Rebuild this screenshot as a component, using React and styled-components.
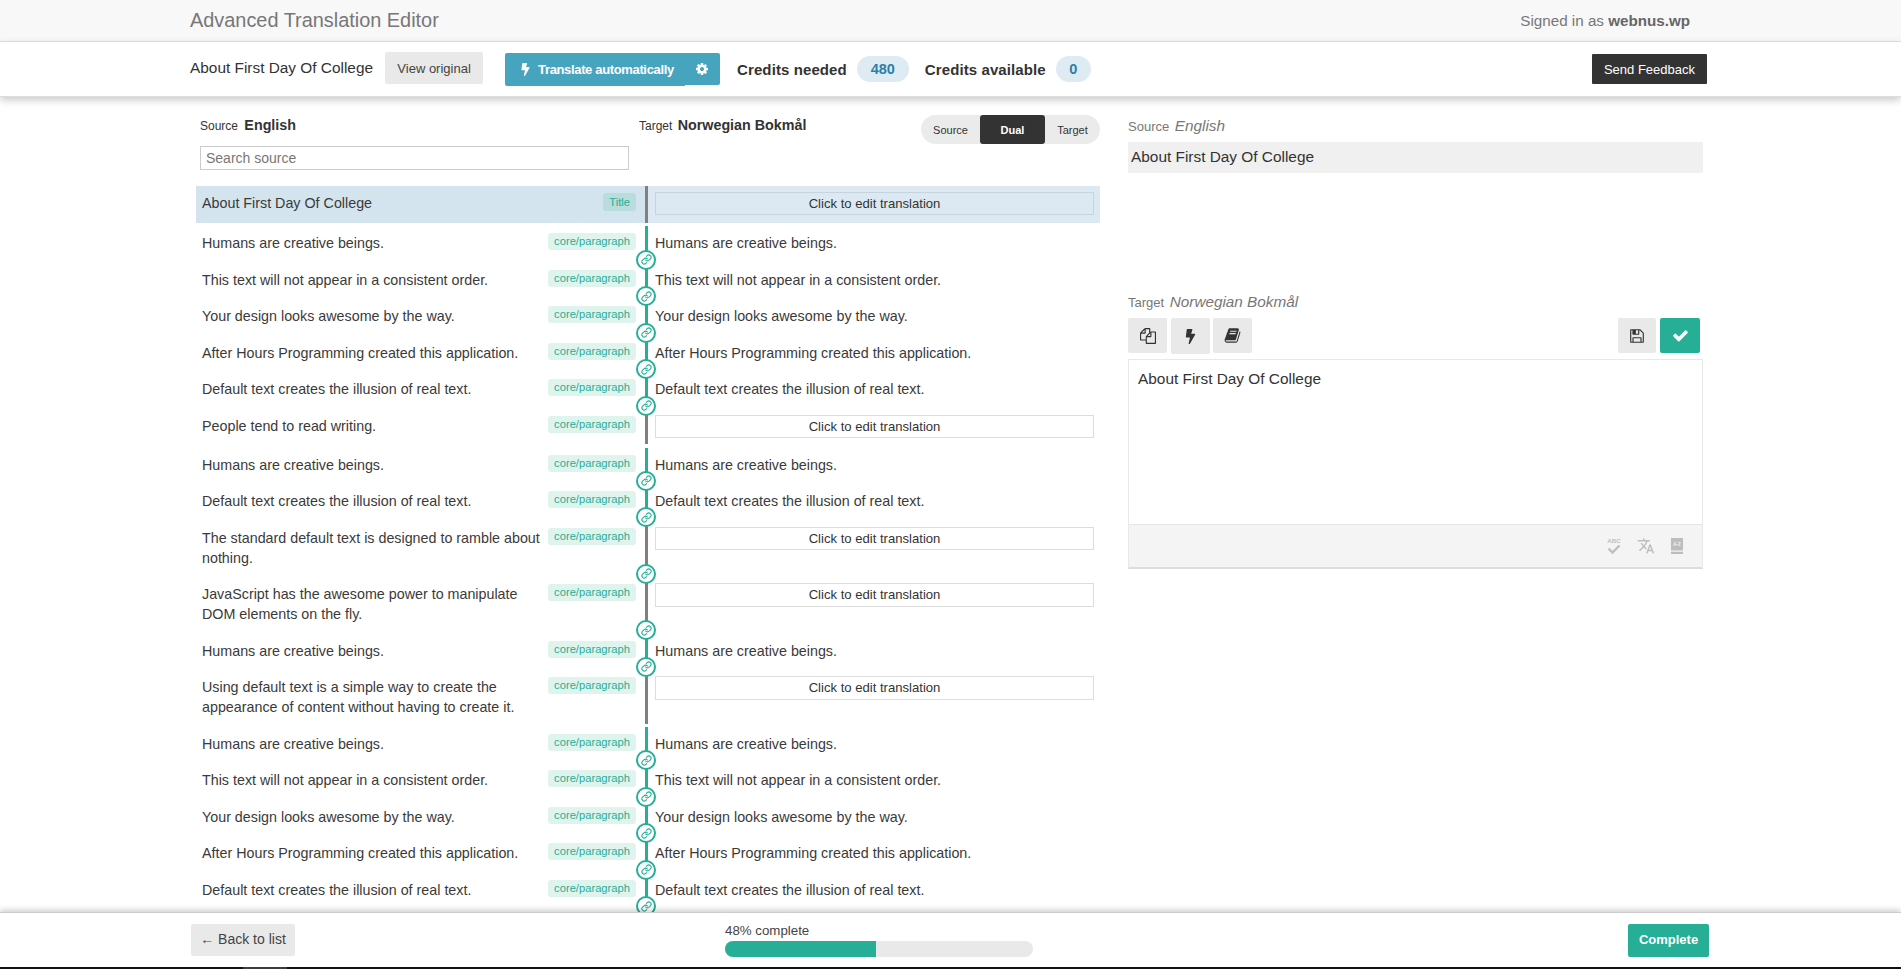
import React from "react";
import styled, { createGlobalStyle } from "styled-components";
import { FaBolt } from "react-icons/fa";
import { Link as LinkIcon } from "lucide-react";

const TEAL = "#27ae96";
const Global = createGlobalStyle`
  html, body { margin: 0; padding: 0; height: 100%; overflow: hidden; background: #fff; }
  body { font-family: "Liberation Sans", Arial, sans-serif; color: #333; font-size: 14px; }
  * { box-sizing: border-box; }
`;
const Page = styled.div`position: relative; height: 969px; overflow: hidden;`;
const TopBar = styled.header`
  height: 42px; background: #f8f8f8; border-bottom: 1px solid #e4e4e4;
  display: flex; align-items: center; justify-content: space-between; padding: 0 211px 1px 190px;
`;
const AppTitle = styled.div`font-size: 19.9px; color: #777;`;
const Signed = styled.div`font-size: 15.2px; color: #777; b { color: #666; }`;
const ActionBar = styled.div`
  position: relative; z-index: 2; height: 55px; background: #fff; border-bottom: 1px solid #ddd;
  box-shadow: 0 3px 8px rgba(0,0,0,.22);
  display: flex; align-items: center; padding: 0 194px 0 190px;
`;
const DocTitle = styled.div`font-size: 15.4px; margin-right: 12px; margin-top: -3px;`;
const GreyBtn = styled.button`
  border: 0; border-radius: 2px; background: #e9e9e9; color: #444; font: 13px "Liberation Sans", Arial, sans-serif;
  height: 32px; width: 98px; margin-top: -2px; padding: 0;
`;
const AutoGroup = styled.div`display: flex; align-items: flex-start; margin-left: 22px; height: 33px; margin-right: 17px;`;
const AutoBtn = styled.div`
  width: 180px; height: 33px; background: #47a4bf; color: #fff; font-size: 13px; font-weight: 700;
  display: flex; align-items: center; gap: 6px; padding-left: 14px; border-radius: 2px 0 0 2px; letter-spacing: -.35px;
`;
const AutoCog = styled.div`
  width: 35px; height: 32px; background: #47a4bf; color: #fff; padding-right: 2px;
  display: flex; align-items: center; justify-content: center; border-radius: 0 2px 2px 0;
`;
const CreditLabel = styled.div`font-size: 15px; font-weight: 700; letter-spacing: .1px; margin-right: 10px;`;
const CreditBadge = styled.div`
  height: 26px; min-width: ${p => p.$w}px; border-radius: 13px; background: #deebf3; color: #2b7fa8;
  font-size: 14.5px; font-weight: 700; display: flex; align-items: center; justify-content: center; margin-right: 16px;
`;
const Feedback = styled.button`
  margin-left: auto; width: 115px; height: 30px; border: 0; background: #333; color: #fff; border-radius: 1px;
  font: 13px "Liberation Sans", Arial, sans-serif; padding: 0;
`;
const Main = styled.main`display: flex; gap: 28px; padding-left: 196px;`;
const LeftCol = styled.section`width: 904px; flex: none;`;
const ListHead = styled.div`height: 89px; display: flex;`;
const HeadSource = styled.div`width: 442px; padding: 18px 0 0 4px;`;
const HeadTarget = styled.div`flex: 1; padding: 18px 0 0 1px; display: flex; align-items: flex-start; justify-content: space-between;`;
const LangLine = styled.div`height: 20px; line-height: 20px; font-size: 12px; b { font-size: 14.3px; margin-left: ${p => p.$gap}px; }`;
const Search = styled.input`
  display: block; margin-top: 11px; width: 429px; height: 24px; border: 1px solid #ccc; padding: 0 5px;
  font: 14px "Liberation Sans", Arial, sans-serif; outline: 0;
  &::placeholder { color: #777; opacity: 1; }
`;
const Segment = styled.div`display: flex; height: 29px; width: 179px; border-radius: 14.5px; background: #ebebeb; overflow: hidden; font-size: 11px;`;
const SegItem = styled.div`
  width: ${p => p.$w}px; display: flex; align-items: center; justify-content: center;
  ${p => p.$on ? "background:#333;color:#fff;font-weight:700;border-radius:3px;" : ""}
`;
const List = styled.div`height: 780px;`;
const Row = styled.div`
  display: flex; margin-bottom: 3.2px;
  ${p => p.$active ? "background: linear-gradient(90deg,#d4e4ef 0 450px,#dce9f2 450px);" : ""}
`;
const SrcCell = styled.div`
  width: 449px; flex: none; display: flex; justify-content: space-between; align-items: flex-start;
  padding: ${p => p.$active ? "7px 9px 10px 6px" : "7px 9px 6.33px 6px"};
`;
const SrcText = styled.div`line-height: 20px; font-size: 14.3px; width: 346px; color: #3a3a3a;`;
const Tag = styled.span`
  flex: none; height: ${p => p.$title ? 18 : 17}px; line-height: ${p => p.$title ? 18 : 16}px; padding: 0 6px; border-radius: 3px; font-size: 11.2px;
  color: ${TEAL}; background: ${p => p.$title ? "#b9dcdd" : "#e0f4ee"};
`;
const Rail = styled.div`
  position: relative; width: 3px; flex: none; background: ${p => p.$linked ? TEAL : "#808080"};
`;
const Knot = styled.div`
  position: absolute; z-index: 1; left: 50%; bottom: -10px; width: 20px; height: 20px; margin-left: -10.5px; border-radius: 50%;
  border: 2.5px solid ${TEAL}; background: #fff; color: ${TEAL};
  display: flex; align-items: center; justify-content: center;
`;
const TgtCell = styled.div`flex: 1; padding: ${p => p.$btn ? "6.17px 6px 6.17px 7px" : "7px 6px 6.33px 7px"};`;
const TgtText = styled.div`line-height: 20px; font-size: 14.3px; color: #3a3a3a;`;
const EditBtn = styled.div`
  height: 23.33px; border: 1px solid ${p => p.$active ? "#c5d5e0" : "#ddd"}; background: ${p => p.$active ? "#dce9f2" : "#fff"};
  font-size: 13.1px; text-align: center; line-height: 22px; color: #333;
`;
const RightCol = styled.aside`width: 575px; padding-top: 19px; flex: none;`;
const PanelLabel = styled.div`height: 20px; line-height: 20px; font-size: 13px; color: #777; margin-top: ${p => p.$mt || 0}px; i { font-size: 15.3px; margin-left: 2px; }`;
const SourceBox = styled.div`margin-top: 6px; height: 31px; line-height: 29px; padding-left: 3px; background: #f0f0f0; font-size: 15.4px;`;
const Tools = styled.div`display: flex; align-items: flex-start; gap: 4px; margin-top: 6px; height: 35px; padding-right: 3px;`;
const ToolBtn = styled.div`
  width: ${p => p.$w || 39}px; height: ${p => p.$h || 35}px; border-radius: 2px; background: ${p => p.$on ? TEAL : "#e9e9e9"};
  color: ${p => p.$on ? "#fff" : "#333"}; display: flex; align-items: center; justify-content: center;
  margin-left: ${p => p.$push ? "auto" : (p.$ml || 0) + "px"};
`;
const Editor = styled.div`margin-top: 6px; height: 210px; border: 1px solid #e8e8e8; border-bottom: 2px solid #ddd; display: flex; flex-direction: column;`;
const EditorText = styled.div`flex: 1; padding: 9px 9px; font-size: 15.4px; line-height: 20px;`;
const EditorFoot = styled.div`
  height: 43px; background: #f4f4f4; border-top: 1px solid #e6e6e6; display: flex; align-items: center; justify-content: flex-end;
  gap: 15px; padding-right: 18px; color: #bdbdbd;
`;
const GuideLetters = styled.text`font-family: "Liberation Sans", Arial, sans-serif; font-weight: 700;`;
const Footer = styled.footer`
  position: absolute; z-index: 3; left: 0; right: 0; bottom: 2px; height: 55px; background: #fff; border-top: 1px solid #ccc;
  box-shadow: 0 -2px 6px rgba(0,0,0,.2); display: flex; align-items: center; padding: 0 192px 0 191px;
`;
const BackBtn = styled.div`width: 104px; height: 32px; background: #e9e9e9; border-radius: 2px; font-size: 14px; line-height: 31px; text-align: center; color: #444;`;
const Progress = styled.div`margin-left: 430px; width: 308px;`;
const ProgressText = styled.div`font-size: 13.3px; line-height: 15px; color: #444; margin-bottom: 3px;`;
const Track = styled.div`height: 16px; border-radius: 8px; background: #e9e9e9; overflow: hidden;`;
const Fill = styled.div`height: 100%; background: ${TEAL};`;
const CompleteBtn = styled.div`
  margin-left: auto; width: 81px; height: 33px; border-radius: 2px; background: ${TEAL}; color: #fff; font-size: 13px; font-weight: 700;
  line-height: 32px; text-align: center;
`;
const Strip = styled.div`
  position: absolute; z-index: 3; left: 0; right: 0; bottom: 0; height: 2px;
  background: linear-gradient(90deg,#111 0 243px,#3c3c3c 243px 287px,#111 287px);
`;

const P = {
  book: "M1703 478q40 57 18 129l-275 906q-19 64-76.500 107.500t-122.500 43.500h-923q-77 0-148.500-53.500t-99.500-131.500q-24-67-2-127 0-4 3-27t4-37q1-8-3-21.500t-3-19.500q2-11 8-21t16.500-23.500 16.500-23.500q23-38 45-91.500t30-91.500q3-10 .5-30t-.5-28q3-11 17-28t17-23q21-36 42-92t25-90q1-9-2.500-32t.5-28q4-13 22-30.500t22-22.500q19-26 42.500-84.500t27.500-96.500q1-8-3-25.500t-2-26.500q2-8 9-18t18-23 17-21q8-12 16.500-30.500t15-35 16-36 19.500-32 26.500-23.500 36-11.500 47.500 5.500l-1 3q38-9 51-9h761q74 0 114 56t18 130l-274 906q-36 119-71.500 153.500t-128.500 34.500h-869q-27 0-38 15-11 16-1 43 24 70 144 70h923q29 0 56-15.500t35-41.500l300-987q7-22 5-57 38 15 59 43zm-1064 2q-4 13 2 22.500t20 9.500h608q13 0 25.500-9.500t16.500-22.500l21-64q4-13-2-22.500t-20-9.500h-608q-13 0-25.500 9.500t-16.500 22.500zm-83 256q-4 13 2 22.500t20 9.500h608q13 0 25.500-9.500t16.500-22.500l21-64q4-13-2-22.500t-20-9.500h-608q-13 0-25.500 9.500t-16.500 22.500z",
  files: "M1696 384q40 0 68 28t28 68v1216q0 40-28 68t-68 28h-960q-40 0-68-28t-28-68v-288h-544q-40 0-68-28t-28-68v-672q0-40 20-88t48-76l408-408q28-28 76-48t88-20h416q40 0 68 28t28 68v328q68-40 128-40h416zm-544 213l-299 299h299v-299zm-640-384l-299 299h299v-299zm196 647l316-316v-416h-384v416q0 40-28 68t-68 28h-416v640h512v-256q0-40 20-88t48-76zm956 804v-1152h-384v416q0 40-28 68t-68 28h-416v640h896z",
  save: "M512 1536h768v-384h-768v384zm896 0h128v-896q0-14-10-38.500t-20-34.500l-281-281q-10-10-34-20t-39-10v416q0 40-28 68t-68 28h-576q-40 0-68-28t-28-68v-416h-128v1280h128v-416q0-40 28-68t68-28h832q40 0 68 28t28 68v416zm-384-928v-320q0-13-9.500-22.500t-22.500-9.500h-192q-13 0-22.500 9.500t-9.500 22.500v320q0 13 9.500 22.500t22.500 9.500h192q13 0 22.500-9.500t9.500-22.500zm640 32v928q0 40-28 68t-68 28h-1344q-40 0-68-28t-28-68v-1344q0-40 28-68t68-28h928q40 0 88 20t76 48l280 280q28 28 48 76t20 88z",
  check: "M1671 566q0 40-28 68l-724 724-136 136q-28 28-68 28t-68-28l-136-136-362-362q-28-28-28-68t28-68l136-136q28-28 68-28t68 28l294 295 656-657q28-28 68-28t68 28l136 136q28 28 28 68z",
  cog: "M1152 896q0-106-75-181t-181-75-181 75-75 181 75 181 181 75 181-75 75-181zm512-109v222q0 12-8 23t-20 13l-185 28q-19 54-39 91 35 50 107 138 10 12 10 25t-9 23q-27 37-99 108t-94 71q-12 0-26-9l-138-108q-44 23-91 38-16 136-29 186-7 28-36 28h-222q-14 0-24.500-8.500t-11.500-21.500l-28-184q-49-16-90-37l-141 107q-10 9-25 9-14 0-25-11-126-114-165-168-7-10-7-23 0-12 8-23 15-21 51-66.500t54-70.500q-27-50-41-99l-183-27q-13-2-21-12.500t-8-23.500v-222q0-12 8-23t19-13l186-28q14-46 39-92-40-57-107-138-10-12-10-24 0-10 9-23 26-36 98.500-107.500t94.500-71.500q13 0 26 10l138 107q44-23 91-38 16-136 29-186 7-28 36-28h222q14 0 24.500 8.500t11.500 21.500l28 184q49 16 90 37l142-107q9-9 24-9 13 0 25 10 129 119 165 170 7 8 7 22 0 12-8 23-15 21-51 66.500t-54 70.500q26 50 41 98l183 28q13 2 21 12.500t8 23.500z",
  translate: "M12.87 15.07l-2.54-2.51.03-.03A17.52 17.52 0 0 0 14.07 6H17V4h-7V2H8v2H1v2h11.17C11.5 7.92 10.44 9.75 9 11.35 8.07 10.32 7.3 9.19 6.69 8h-2c.73 1.63 1.73 3.17 2.98 4.56l-5.09 5.02L4 19l5-5 3.110 3.110.76-2.040zM18.500 10h-2L12 22h2l1.120-3h4.750L21 22h2l-4.500-12zm-2.620 7l1.620-4.330L19.120 17h-3.240z",
};

const Fa = ({ d, size }) => (
  <svg width={size} height={size} viewBox="0 0 1792 1792" fill="currentColor" aria-hidden="true"><path d={d} /></svg>
);

const rows = [
  ["Humans are creative beings.", 1, 1, 1],
  ["This text will not appear in a consistent order.", 1, 1, 1],
  ["Your design looks awesome by the way.", 1, 1, 1],
  ["After Hours Programming created this application.", 1, 1, 1],
  ["Default text creates the illusion of real text.", 1, 1, 1],
  ["People tend to read writing.", 0, 0, 0],
  ["Humans are creative beings.", 1, 1, 1],
  ["Default text creates the illusion of real text.", 1, 1, 1],
  ["The standard default text is designed to ramble about nothing.", 0, 1, 0],
  ["JavaScript has the awesome power to manipulate DOM elements on the fly.", 0, 1, 0],
  ["Humans are creative beings.", 1, 1, 1],
  ["Using default text is a simple way to create the appearance of content without having to create it.", 0, 0, 0],
  ["Humans are creative beings.", 1, 1, 1],
  ["This text will not appear in a consistent order.", 1, 1, 1],
  ["Your design looks awesome by the way.", 1, 1, 1],
  ["After Hours Programming created this application.", 1, 1, 1],
  ["Default text creates the illusion of real text.", 1, 1, 1],
];

const SpellIcon = () => (
  <svg width="16" height="18" viewBox="0 0 16 18" aria-hidden="true">
    <GuideLetters x="8" y="6" textAnchor="middle" fontSize="6.2" fill="currentColor">ABC</GuideLetters>
    <path d="M2.500 11.500l4 4 7-7" fill="none" stroke="currentColor" strokeWidth="2.400" />
  </svg>
);
const GuideIcon = () => (
  <svg width="14" height="16" viewBox="0 0 14 16" aria-hidden="true">
    <path fill="currentColor" d="M1 0h12v12.500H1zM1 13.700h12V16H1z" />
    <GuideLetters x="7" y="8" textAnchor="middle" fontSize="4.500" fill="#f4f4f4">A-Z</GuideLetters>
  </svg>
);
const TranslateIcon = () => (
  <svg width="18" height="18" viewBox="0 0 24 24" fill="currentColor" aria-hidden="true"><path d={P.translate} /></svg>
);

export default function App() {
  return (
    <Page>
      <Global />
      <TopBar>
        <AppTitle>Advanced Translation Editor</AppTitle>
        <Signed>Signed in as <b>webnus.wp</b></Signed>
      </TopBar>
      <ActionBar>
        <DocTitle>About First Day Of College</DocTitle>
        <GreyBtn>View original</GreyBtn>
        <AutoGroup>
          <AutoBtn><FaBolt size={13} /> Translate automatically</AutoBtn>
          <AutoCog><Fa d={P.cog} size={14} /></AutoCog>
        </AutoGroup>
        <CreditLabel>Credits needed</CreditLabel>
        <CreditBadge $w={52}>480</CreditBadge>
        <CreditLabel>Credits available</CreditLabel>
        <CreditBadge $w={35}>0</CreditBadge>
        <Feedback>Send Feedback</Feedback>
      </ActionBar>
      <Main>
        <LeftCol>
          <ListHead>
            <HeadSource>
              <LangLine $gap={3}>Source <b>English</b></LangLine>
              <Search placeholder="Search source" readOnly />
            </HeadSource>
            <HeadTarget>
              <LangLine $gap={2}>Target <b>Norwegian Bokmål</b></LangLine>
              <Segment>
                <SegItem $w={59}>Source</SegItem>
                <SegItem $w={65} $on>Dual</SegItem>
                <SegItem $w={55}>Target</SegItem>
              </Segment>
            </HeadTarget>
          </ListHead>
          <List>
            <Row $active>
              <SrcCell $active>
                <SrcText>About First Day Of College</SrcText>
                <Tag $title>Title</Tag>
              </SrcCell>
              <Rail />
              <TgtCell $btn><EditBtn $active>Click to edit translation</EditBtn></TgtCell>
            </Row>
            {rows.map(([text, done, knot, linked], i) => (
              <Row key={i}>
                <SrcCell>
                  <SrcText>{text}</SrcText>
                  <Tag>core/paragraph</Tag>
                </SrcCell>
                <Rail $linked={!!linked}>
                  {knot ? <Knot><LinkIcon size={11} strokeWidth={2.4} /></Knot> : null}
                </Rail>
                <TgtCell $btn={!done}>
                  {done ? <TgtText>{text}</TgtText> : <EditBtn>Click to edit translation</EditBtn>}
                </TgtCell>
              </Row>
            ))}
          </List>
        </LeftCol>
        <RightCol>
          <PanelLabel>Source <i>English</i></PanelLabel>
          <SourceBox>About First Day Of College</SourceBox>
          <PanelLabel $mt={119}>Target <i>Norwegian Bokmål</i></PanelLabel>
          <Tools>
            <ToolBtn><Fa d={P.files} size={16} /></ToolBtn>
            <ToolBtn $h={36}><FaBolt size={15} /></ToolBtn>
            <ToolBtn $ml={-1}><Fa d={P.book} size={17} /></ToolBtn>
            <ToolBtn $push $w={38}><Fa d={P.save} size={16} /></ToolBtn>
            <ToolBtn $on $w={40}><Fa d={P.check} size={17} /></ToolBtn>
          </Tools>
          <Editor>
            <EditorText>About First Day Of College</EditorText>
            <EditorFoot>
              <SpellIcon />
              <TranslateIcon />
              <GuideIcon />
            </EditorFoot>
          </Editor>
        </RightCol>
      </Main>
      <Footer>
        <BackBtn>← Back to list</BackBtn>
        <Progress>
          <ProgressText>48% complete</ProgressText>
          <Track><Fill style={{ width: "49%" }} /></Track>
        </Progress>
        <CompleteBtn>Complete</CompleteBtn>
      </Footer>
      <Strip />
    </Page>
  );
}
